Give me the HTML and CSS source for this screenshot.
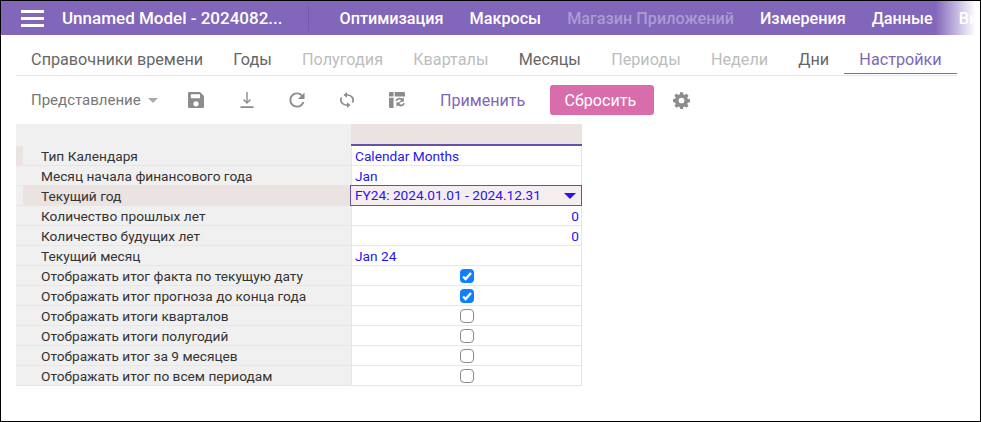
FILE: index.html
```html
<!DOCTYPE html>
<html lang="en">
<head>
    <meta charset="utf-8">
    <title>Unnamed Model</title>
    <link rel="stylesheet" href="styles.css">
</head>
<body>
    <header class="topbar">
        <button class="burger" aria-label="Меню"><span></span><span></span><span></span></button>
        <div class="model-name">Unnamed Model - 2024082...</div>
        <div class="top-sep"></div>
        <nav class="top-menu">
            <a>Оптимизация</a>
            <a>Макросы</a>
            <a class="off">Магазин Приложений</a>
            <a>Измерения</a>
            <a>Данные</a>
            <a>Вид</a>
        </nav>
        <div class="top-fade"></div>
    </header>

    <nav class="tabs">
        <a>Справочники времени</a>
        <a>Годы</a>
        <a class="off">Полугодия</a>
        <a class="off">Кварталы</a>
        <a>Месяцы</a>
        <a class="off">Периоды</a>
        <a class="off">Недели</a>
        <a>Дни</a>
        <a class="active">Настройки</a>
    </nav>

    <div class="toolbar">
        <div class="view-select">Представление <span class="caret"></span></div>
        <svg class="tool" viewBox="1 1 14 14"><path d="M2 1h9.500L15 4.500V14a1 1 0 0 1-1 1H2a1 1 0 0 1-1-1V2a1 1 0 0 1 1-1zM3.500 3v3.500h8V3zM8 9a2.300 2.300 0 1 0 0 4.600A2.300 2.300 0 0 0 8 9z" fill-rule="evenodd"/></svg>
        <svg class="tool" viewBox="0 0 16 16"><path d="M7.300 0h1.400v9.300l2.300-2.300 1 1L8 12 4 8l1-1 2.300 2.300zM1.500 14.300h13V16h-13z"/></svg>
        <svg class="tool" viewBox="3.500 3.500 17 17"><path d="M17.650 6.350C16.200 4.900 14.210 4 12 4c-4.420 0-7.990 3.580-7.990 8s3.570 8 7.990 8c3.730 0 6.840-2.550 7.730-6h-2.080c-.82 2.330-3.040 4-5.650 4-3.310 0-6-2.690-6-6s2.690-6 6-6c1.660 0 3.140.69 4.220 1.780L13 11h7V4l-2.350 2.350z"/></svg>
        <svg class="tool" viewBox="3 1 18 22" preserveAspectRatio="none"><path d="M12 4V1L8 5l4 4V6c3.310 0 6 2.690 6 6 0 1.010-.25 1.970-.7 2.800l1.460 1.460C19.540 15.030 20 13.570 20 12c0-4.420-3.580-8-8-8zm0 14c-3.310 0-6-2.690-6-6 0-1.010.25-1.970.7-2.800L5.240 7.740C4.460 8.970 4 10.430 4 12c0 4.420 3.580 8 8 8v3l4-4-4-4v3z"/></svg>
        <svg class="tool" viewBox="1 1 14 14"><path d="M1 6h4v9H2a1 1 0 0 1-1-1zM1 5V2a1 1 0 0 1 1-1h3v4zM6 1h8a1 1 0 0 1 1 1v3H6z"/><path d="M6.500 8.500C7.500 6 10.500 5.300 12.700 6.700L14 5.500V9.500H10L11.500 8C10 7.200 8.600 7.600 8 9zM15 11C14 13.500 11 14.300 8.800 12.900L7.500 14V10H11.500L10 11.500C11.500 12.300 13 12 13.500 10.600z"/></svg>
        <button class="btn-apply">Применить</button>
        <button class="btn-reset">Сбросить</button>
        <svg class="tool gear" viewBox="-0.300 -0.300 16.600 16.600"><path d="M6.600 0h2.800l.4 2.200 1.200.5L12.900 1.400l2 2-1.300 1.900.5 1.200 2.200.4v2.800l-2.200.4-.5 1.200 1.300 1.900-2 2-1.900-1.300-1.200.5-.4 2.200H6.600l-.4-2.200-1.200-.5-1.900 1.300-2-2 1.300-1.900-.5-1.200L-.3 9.400V6.600l2.200-.4.500-1.200L1.100 3.100l2-2L5 2.700l1.200-.5zM8 5.200a2.800 2.800 0 1 0 0 5.600 2.800 2.800 0 0 0 0-5.600z" fill-rule="evenodd"/></svg>
    </div>

    <div class="grid">
        <div class="grid-head">
            <div class="head-left"></div>
            <div class="head-right"></div>
        </div>
        <div class="row mark"><div class="label">Тип Календаря</div><div class="cell link">Calendar Months</div></div>
        <div class="row"><div class="label">Месяц начала финансового года</div><div class="cell link">Jan</div></div>
        <div class="row current"><div class="label">Текущий год</div><div class="cell link picked">FY24: 2024.01.01 - 2024.12.31<span class="pick-caret"></span></div></div>
        <div class="row"><div class="label">Количество прошлых лет</div><div class="cell link num">0</div></div>
        <div class="row"><div class="label">Количество будущих лет</div><div class="cell link num">0</div></div>
        <div class="row"><div class="label">Текущий месяц</div><div class="cell link">Jan 24</div></div>
        <div class="row"><div class="label">Отображать итог факта по текущую дату</div><div class="cell check"><span class="box on"><svg viewBox="0 0 14 14"><path d="M3 7.500l2.600 2.600L11 4" fill="none" stroke="#fff" stroke-width="2.400"/></svg></span></div></div>
        <div class="row"><div class="label">Отображать итог прогноза до конца года</div><div class="cell check"><span class="box on"><svg viewBox="0 0 14 14"><path d="M3 7.500l2.600 2.600L11 4" fill="none" stroke="#fff" stroke-width="2.400"/></svg></span></div></div>
        <div class="row"><div class="label">Отображать итоги кварталов</div><div class="cell check"><span class="box"></span></div></div>
        <div class="row"><div class="label">Отображать итоги полугодий</div><div class="cell check"><span class="box"></span></div></div>
        <div class="row"><div class="label">Отображать итог за 9 месяцев</div><div class="cell check"><span class="box"></span></div></div>
        <div class="row"><div class="label">Отображать итог по всем периодам</div><div class="cell check"><span class="box"></span></div></div>
    </div>
</body>
</html>
```

FILE: styles.css
```css
body {
    margin: 0;
    box-sizing: border-box;
    height: 422px;
    overflow: hidden;
    border: 1px solid #000;
    background-color: #fff;
    font-family: Roboto, "Liberation Sans", sans-serif;
    color: #333;
}
.topbar {
    position: relative;
    display: flex;
    align-items: center;
    height: 34px;
    background-color: #8166ba;
    overflow: hidden;
    color: #fff;
}
.burger {
    display: flex;
    flex: none;
    flex-direction: column;
    justify-content: space-between;
    width: 23px;
    height: 17px;
    margin-left: 20px;
    padding: 0;
    border: none;
    background: none;
}
.burger span {
    height: 3px;
    background-color: #fff;
}
.model-name {
    flex: none;
    margin-left: 18px;
    font-size: 17px;
    font-weight: 500;
    white-space: nowrap;
}
.top-sep {
    flex: none;
    width: 1px;
    height: 25px;
    margin-left: 25px;
    background-color: #7459ab;
}
.top-menu {
    display: flex;
    flex: none;
    gap: 26px;
    margin-left: 31px;
    font-size: 16.2px;
    font-weight: 500;
    white-space: nowrap;
}
.top-menu .off {
    color: #ab9bd4;
}
.top-fade {
    position: absolute;
    right: 0;
    top: 0;
    width: 45px;
    height: 34px;
    background: linear-gradient(to right, rgba(255, 255, 255, 0), #fff 90%);
}
.tabs {
    display: flex;
    height: 40px;
    margin-left: 15px;
    margin-right: 23px;
    border-bottom: 1px solid #e6e6e6;
    font-size: 16.2px;
    white-space: nowrap;
}
.tabs a {
    padding: 15px 15.1px 0;
    color: #666;
}
.tabs .off {
    color: #bdbdbd;
}
.tabs .active {
    color: #8166ba;
    height: 23px;
    border-bottom: 1px solid #8166ba;
}
.toolbar {
    display: flex;
    align-items: center;
    height: 48px;
    margin-left: 30px;
}
.view-select {
    display: flex;
    align-items: center;
    width: 157px;
    font-size: 15px;
    color: #777;
}
.caret {
    margin-left: 7px;
    border-left: 5px solid transparent;
    border-right: 5px solid transparent;
    border-top: 5px solid #aaa;
}
.tool {
    width: 16px;
    height: 16px;
    margin-right: 34px;
    fill: #8c8c8c;
}
.view-select + .tool {
    margin-right: 35px;
}
.btn-apply {
    margin-left: 1px;
    padding: 0;
    border: none;
    background: none;
    font-family: inherit;
    font-size: 16.1px;
    color: #8166ba;
}
.btn-reset {
    width: 104px;
    height: 30px;
    margin-left: 25px;
    padding: 0 4px 0 0;
    border: none;
    border-radius: 3px;
    background-color: #d96dab;
    font-family: inherit;
    font-size: 16.1px;
    color: #fff;
}
.gear {
    margin-left: 19px;
    margin-right: 0;
    width: 17px;
    height: 17px;
}
.grid {
    width: 566px;
    margin-left: 15px;
    font-size: 13.7px;
    color: #333;
}
.grid-head {
    display: flex;
    height: 22px;
}
.head-left {
    width: 335px;
    background-color: #f0f0f0;
}
.head-right {
    flex: 1;
    background-color: #ebe2e2;
    border-bottom: 2px solid #6750a8;
}
.row {
    display: flex;
    height: 20px;
    box-sizing: border-box;
    border-bottom: 1px solid #e6e6e6;
}
.label {
    width: 335px;
    box-sizing: border-box;
    padding-left: 25px;
    line-height: 20px;
    background-color: #f0f0f0;
    white-space: nowrap;
}
.mark .label {
    background: linear-gradient(to right, #ebe2e2 7px, #f0f0f0 7px);
}
.current .label {
    background: linear-gradient(to right, #f0f0f0 7px, #ebe2e2 7px);
}
.cell {
    flex: 1;
    box-sizing: border-box;
    padding: 0 3px;
    line-height: 20px;
    border-left: 1px solid #e6e6e6;
    border-right: 1px solid #e6e6e6;
}
.link {
    color: #2a14f0;
}
.num {
    text-align: right;
    padding-right: 2px;
}
.picked {
    position: relative;
    height: 21px;
    margin: -1px 0 0 -1px;
    padding-left: 4px;
    border: 1px solid #6750a8;
    background-color: #f6eeee;
    line-height: 19px;
}
.pick-caret {
    position: absolute;
    right: 5px;
    top: 7px;
    border-left: 6px solid transparent;
    border-right: 6px solid transparent;
    border-top: 6px solid #2a14f0;
}
.check {
    display: flex;
    align-items: center;
    justify-content: center;
}
.box {
    display: block;
    width: 14px;
    height: 14px;
    box-sizing: border-box;
    border: 1.5px solid #8a8a8a;
    border-radius: 4px;
    background-color: #fff;
}
.box.on {
    border: none;
    background-color: #0d7fff;
}
.box svg {
    display: block;
    width: 14px;
    height: 14px;
}
```
